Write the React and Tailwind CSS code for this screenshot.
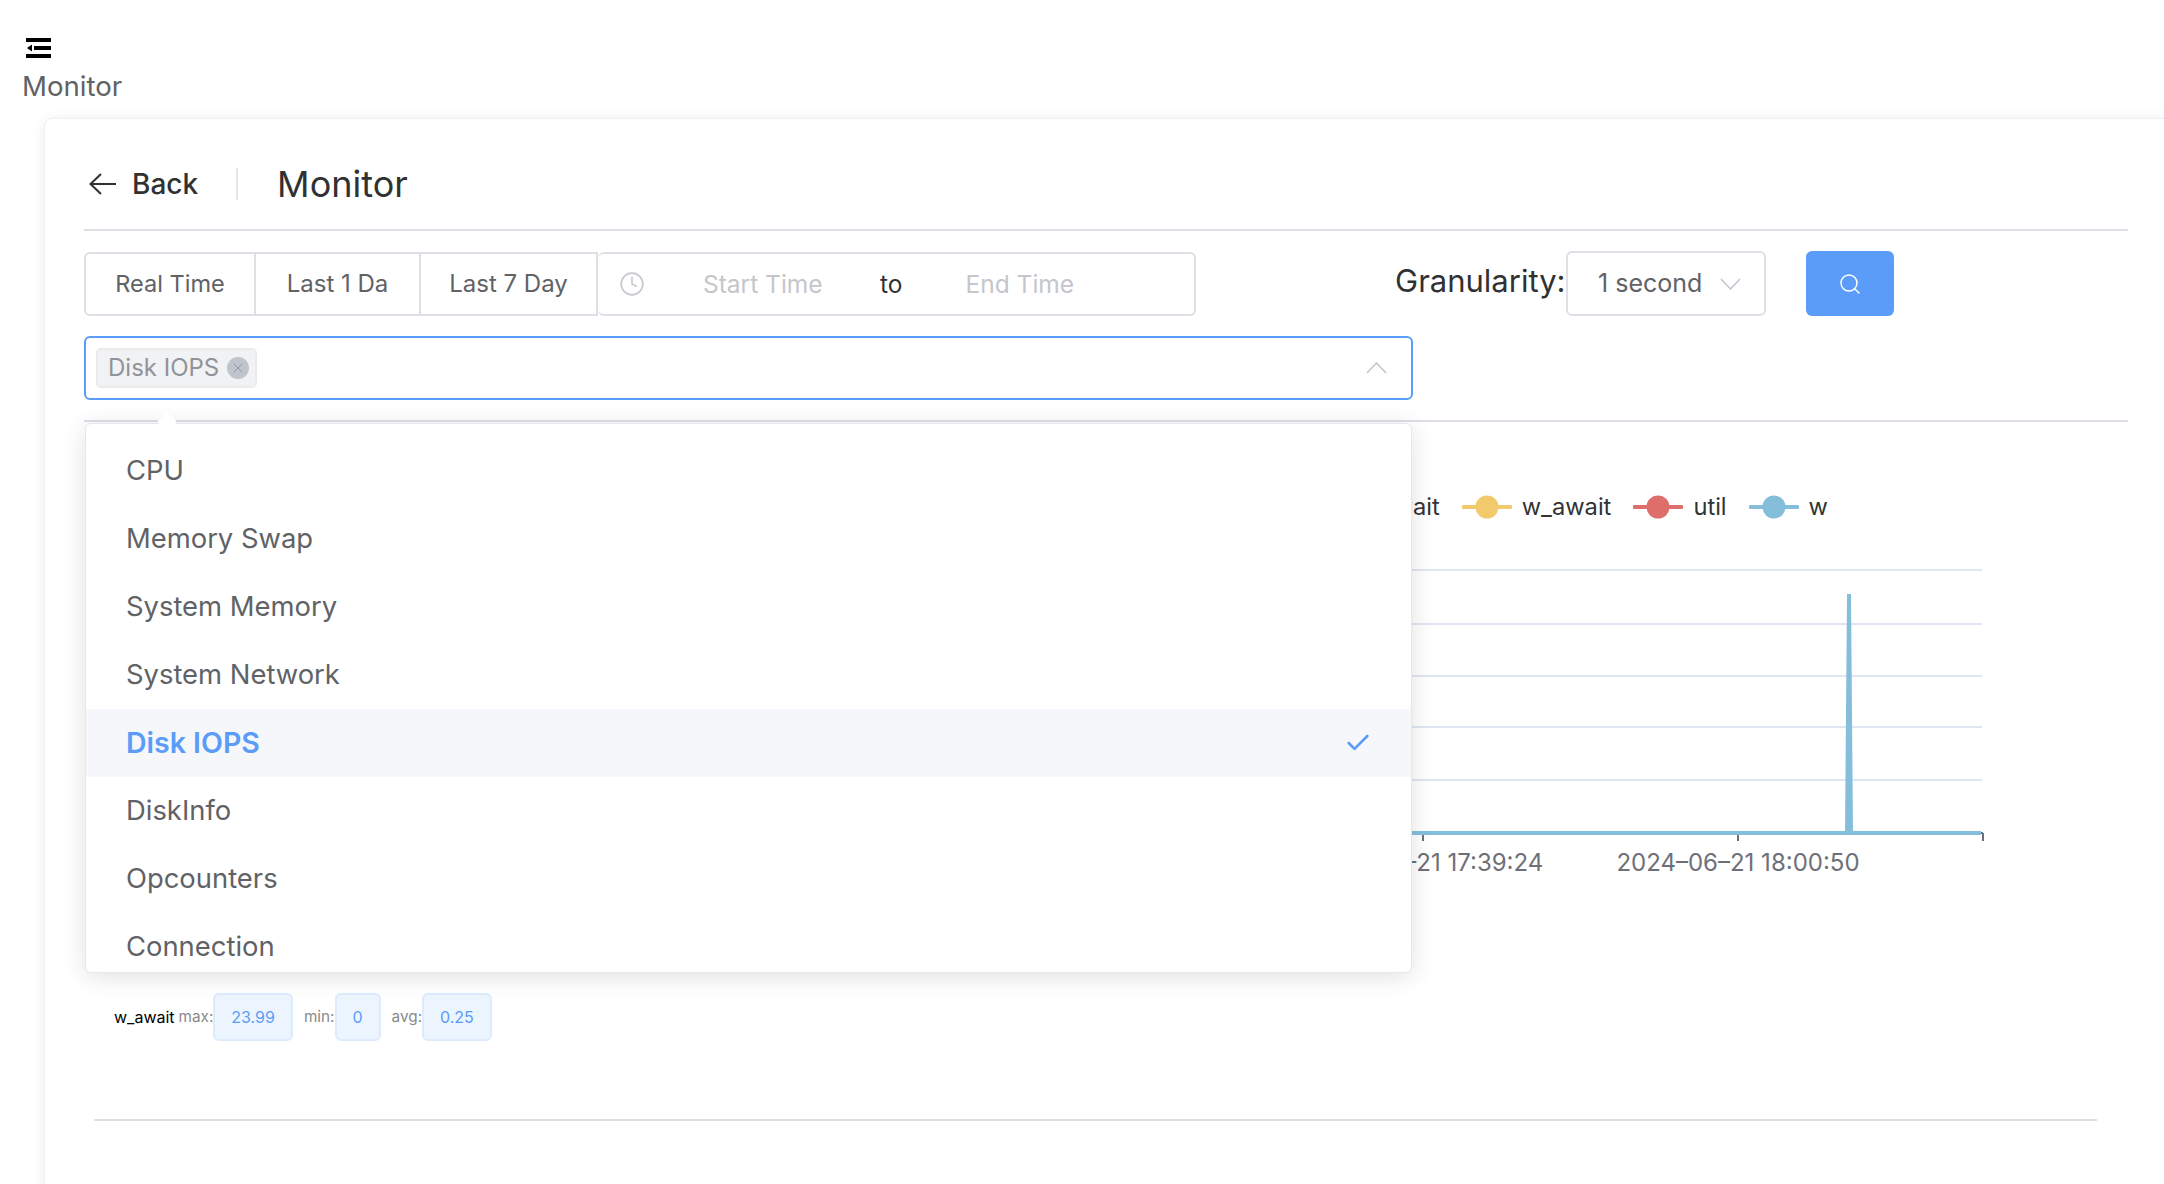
import { Check, Clock, Search, X } from "lucide-react";

const OPTIONS = ["CPU", "Memory Swap", "System Memory", "System Network", "Disk IOPS", "DiskInfo", "Opcounters", "Connection"];

const LEGEND = [
  { name: "r_await", color: "#91cc75" },
  { name: "w_await", color: "#f3ca6b" },
  { name: "util", color: "#de6e6a" },
  { name: "w", color: "#85bedb" },
];

const GRID_Y = [51, 105, 157, 208, 261];

function LegendItem({ name, color }) {
  return (
    <div className="flex items-center">
      <svg width="50" height="24" viewBox="0 0 50 24" className="shrink-0">
        <rect x="0" y="10" width="50" height="4" rx="1" fill={color} />
        <circle cx="25" cy="12" r="11.5" fill={color} />
      </svg>
      <span className="ml-[10px] text-[23.7px] leading-none text-[#333]">{name}</span>
    </div>
  );
}

function Chart() {
  return (
    <svg width="2044" height="474" viewBox="0 0 2044 474" className="block">
      {GRID_Y.map((y) => (
        <line key={y} x1="100" x2="1898" y1={y} y2={y} stroke="#e0e6f1" strokeWidth="2" />
      ))}
      <line x1="100" x2="1899" y1="314" y2="314" stroke="#6e7079" strokeWidth="2" />
      {[1339, 1654, 1899].map((x) => (
        <line key={x} x1={x} x2={x} y1="314" y2="322" stroke="#6e7079" strokeWidth="2" />
      ))}
      <path d="M100 314 H1763 L1765 75 L1767 314 H1897" fill="none" stroke="#85bedb" strokeWidth="4" />
      <text x="1339" y="352" textAnchor="middle" fill="#6e7079" fontSize="24">2024–06–21 17:39:24</text>
      <text x="1654" y="352" textAnchor="middle" fill="#6e7079" fontSize="24">2024–06–21 18:00:50</text>
    </svg>
  );
}

function Stat({ label, value, className }) {
  return (
    <>
      <span className={`text-[15.3px] text-[#8a8a8a] ${className}`}>{label}</span>
      <span className="flex h-[48px] items-center rounded-[6px] border-2 border-[#dcebfd] bg-[#ecf4fe] px-[16px] text-[16px] text-[#5b9cf8]">
        {value}
      </span>
    </>
  );
}

export default function App() {
  return (
    <div className="h-[1184px] w-full overflow-hidden bg-white font-[family-name:Inter,sans-serif]">
      {/* Top bar */}
      <div className="pl-[22px] pt-[38px]">
        <svg width="26" height="20" viewBox="0 0 26 20" className="ml-[4px] block">
          <path d="M0 0H25V4H0ZM0 16H25V20H0ZM8 8H25V12H8ZM1 10L6 6.5V13.5Z" fill="#000" />
        </svg>
        <div className="mt-[10px] text-[27.6px] leading-[36px] text-[#606266]">Monitor</div>
      </div>

      {/* Card */}
      <div className="relative ml-[44px] mt-[14px] h-[1100px] w-[2140px] rounded-tl-[8px] border border-[#f0f0f2] bg-white pl-[39px] shadow-[0_2px_14px_rgba(0,0,0,0.08)]">
        <div className="w-[2044px]">
          {/* Page header */}
          <div className="flex h-[112px] items-center border-b-2 border-[#dfe0e6] pt-[20px]">
            <svg width="27" height="22" viewBox="0 0 27 22" className="ml-[5px] shrink-0" fill="none" stroke="#303133" strokeWidth="2">
              <path d="M1.5 11H27M12 1L1.5 11L12 21" />
            </svg>
            <span className="ml-[16px] text-[28px] font-medium text-[#303133]">Back</span>
            <span className="ml-[38px] h-[32px] w-[2px] bg-[#e4e6ea]" />
            <span className="ml-[39px] text-[36px] text-[#303133]">Monitor</span>
          </div>

          {/* Filters */}
          <div className="mt-[21px] flex items-center">
            <div className="flex h-[64px] text-[24px] text-[#606266]">
              <div className="flex w-[172px] items-center justify-center rounded-l-[6px] border-2 border-[#dfe0e6] text-[23.5px]">Real Time</div>
              <div className="flex w-[165px] items-center justify-center border-y-2 border-r-2 border-[#dfe0e6]">Last 1 Da</div>
              <div className="flex w-[177px] items-center justify-center border-y-2 border-r-2 border-[#dfe0e6]">Last 7 Day</div>
              <div className="flex w-[598px] items-center rounded-[6px] border-2 border-l-0 border-[#dfe0e6] text-[24.5px]">
                <Clock size={26} strokeWidth={1.5} className="ml-[21px] text-[#c6c8ce]" />
                <span className="ml-[58px] w-[119px] whitespace-nowrap text-[#c4c6cc]">Start Time</span>
                <span className="ml-[58px] text-[#303133]">to</span>
                <span className="ml-[63px] whitespace-nowrap text-[#c4c6cc]">End Time</span>
              </div>
            </div>
            <span className="mb-[5px] ml-[199px] w-[171px] whitespace-nowrap text-[31px] text-[#303133]">Granularity:</span>
            <div className="-mt-[1px] flex h-[65px] w-[200px] items-center rounded-[6px] border-2 border-[#dfe0e6] pl-[30px] text-[25px] text-[#606266]">
              1 second
              <svg width="21" height="12" viewBox="0 0 21 12" className="ml-[18px] shrink-0" fill="none" stroke="#c0c4cc" strokeWidth="1.5">
                <path d="M1 1L10.5 11L20 1" />
              </svg>
            </div>
            <div className="-mt-[1px] ml-[40px] flex h-[65px] w-[88px] items-center justify-center rounded-[6px] bg-[#5b9cf8]">
              <Search size={24} strokeWidth={1.5} className="text-white" />
            </div>
          </div>

          {/* Metric select */}
          <div className="relative mt-[20px] w-[1329px]">
            <div className="flex h-[64px] items-center rounded-[6px] border-2 border-[#5b9cf8] bg-white pl-[10px] pr-[24px]">
              <div className="flex h-[40px] items-center rounded-[5px] border-2 border-[#ebebee] bg-[#f1f2f4] pl-[10px] pr-[6px] text-[24px] text-[#909399]">
                Disk IOPS
                <span className="ml-[8px] flex h-[22px] w-[22px] items-center justify-center rounded-full bg-[#c0c4cc]">
                  <X size={16} strokeWidth={1.25} className="text-[#8a8d94]" />
                </span>
              </div>
              <svg width="21" height="12" viewBox="0 0 21 12" className="ml-auto shrink-0" fill="none" stroke="#c0c4cc" strokeWidth="1.5">
                <path d="M1 11L10.5 1L20 11" />
              </svg>
            </div>

            {/* Dropdown */}
            <div className="absolute left-[1px] top-[87px] z-20 h-[550px] w-[1327px] overflow-hidden rounded-[6px] border border-[#e4e7ed] bg-white shadow-[0_4px_24px_rgba(0,0,0,0.12)]">
              <div className="pt-[13px]">
                {OPTIONS.map((opt) => (
                  <div
                    key={opt}
                    className={
                      opt === "Disk IOPS"
                        ? "flex h-[68px] items-center justify-between bg-[#f5f7fa] pl-[40px] pr-[39px] text-[28.5px] font-semibold text-[#5b9cf8]"
                        : "flex h-[68px] items-center pl-[40px] text-[27.4px] text-[#606266]"
                    }
                  >
                    {opt}
                    {opt === "Disk IOPS" && <Check size={28} strokeWidth={2.25} />}
                  </div>
                ))}
              </div>
            </div>
            <div className="absolute left-[76px] top-[79px] z-30 h-[14px] w-[14px] rotate-45 bg-white" />
          </div>

          {/* Chart panel */}
          <div className="mt-[20px] border-t-2 border-[#dfe0e6]">
            <div className="flex h-[97px] items-end justify-end gap-[22px] pr-[300px]">
              {LEGEND.map((item) => (
                <LegendItem key={item.name} {...item} />
              ))}
            </div>
            <Chart />
            <div className="flex items-center pl-[30px]">
              <span className="text-[16px] text-black">w_await</span>
              <Stat label="max:" value="23.99" className="ml-[4px]" />
              <Stat label="min:" value="0" className="ml-[11px]" />
              <Stat label="avg:" value="0.25" className="ml-[11px]" />
            </div>
          </div>
        </div>
        <div className="ml-[10px] mt-[78px] h-[2px] w-[2003px] bg-[#dfe0e6]" />
      </div>
    </div>
  );
}
